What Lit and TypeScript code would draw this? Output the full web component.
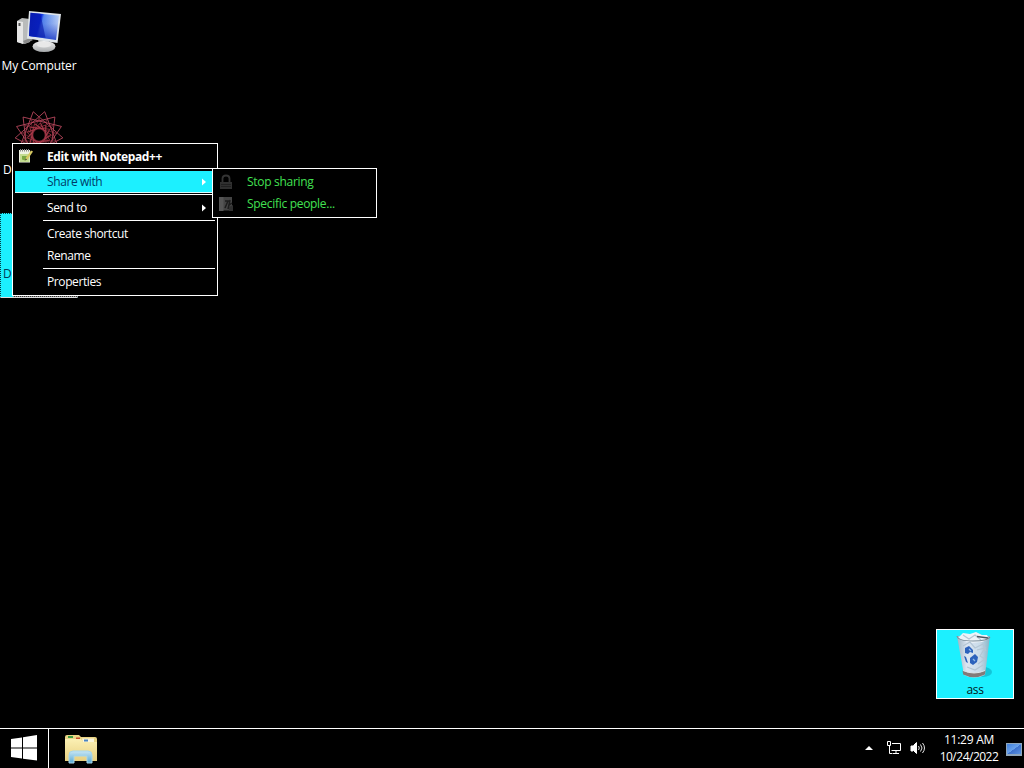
import { LitElement, html, css, svg } from "lit";
import { customElement } from "lit/decorators.js";

const computerIcon = svg`
<svg width="48" height="44" viewBox="0 0 48 44">
  <defs>
    <linearGradient id="scr" x1="0" y1="0" x2="1" y2="0.25"><stop offset="0" stop-color="#0a20b8"/><stop offset=".42" stop-color="#0b2ee0"/><stop offset=".5" stop-color="#5a8cf0"/><stop offset="1" stop-color="#c6dcfa"/></linearGradient>
    <linearGradient id="scr2" x1="0" y1="0" x2="0" y2="1"><stop offset="0" stop-color="#0820b0" stop-opacity="0"/><stop offset=".4" stop-color="#0828c0" stop-opacity=".15"/><stop offset="1" stop-color="#0828c0" stop-opacity=".8"/></linearGradient>
    <linearGradient id="base" x1="0" y1="0" x2="0" y2="1"><stop offset="0" stop-color="#f4f4f4"/><stop offset="1" stop-color="#a5a8aa"/></linearGradient>
  </defs>
  <path d="M2 11 7 8l8 1v23l-6 2-7-2z" fill="#b9bbbb"/><path d="M2 11l6 1v22l-6-2z" fill="#e6e6e6"/>
  <path d="M8 31l7-3 3 2-8 4z" fill="#8a8a8a"/><path d="M3.500 13h2v3h-2z" fill="#555"/>
  <path d="M23 29h10l2 6H24z" fill="#b9bcbd"/>
  <ellipse cx="29" cy="36.500" rx="11.500" ry="5.500" fill="url(#base)"/>
  <ellipse cx="29" cy="35" rx="7" ry="2.500" fill="#e8e8e8"/>
  <path d="M14 1 46 4 42.500 33 12 28.500z" fill="#dfe5ea"/>
  <path d="M15.500 2.800 44 5.500 41 30 14 26z" fill="url(#scr)"/>
  <path d="M15.500 2.800 44 5.500 41 30 14 26z" fill="url(#scr2)"/>
  <path d="M15.500 2.800l10 1 5 24L14 26z" fill="#0718a8" opacity=".6"/>
</svg>`;

const star = (points: number, step: number, radius: number, turn: number) =>
  Array.from({ length: points }, (_, i) => {
    const a = (i * step * 2 * Math.PI) / points + turn;
    return `${(radius * Math.sin(a)).toFixed(2)},${(-radius * Math.cos(a)).toFixed(2)}`;
  }).join(" ");

const spiralIcon = svg`
<svg width="50" height="50" viewBox="-25 -25 50 50" fill="none">
  <polygon points="${star(13, 4, 24, 0.24)}" stroke="#c04a60" stroke-opacity=".85" stroke-width="1"/>
  <polygon points="${star(13, 5, 17, 0)}" stroke="#a33649" stroke-opacity=".6" stroke-width=".9"/>
  <polygon points="${star(13, 4, 12, 0.1)}" stroke="#b53c4e" stroke-opacity=".75" stroke-width="1"/>
</svg>`;

const binIcon = svg`
<svg width="42" height="50" viewBox="0 0 42 50">
  <defs><linearGradient id="can" x1="0" x2="1"><stop offset="0" stop-color="#9fb4c2"/><stop offset=".3" stop-color="#dce6f2"/><stop offset=".7" stop-color="#c8dae8"/><stop offset="1" stop-color="#86b4c6"/></linearGradient></defs>
  <ellipse cx="29" cy="41" rx="9" ry="5" fill="#0a9cb4" opacity=".5"/>
  <path d="M3 5h33l-5 39q-11 5-21 0z" fill="url(#can)"/>
  <path d="M4 7 9 2l7 1 6-2 6 3 5 0 2 4-7 3-12 1z" fill="#edf3f8"/>
  <path d="M9 4l6 4 6-4 6 5M9 15l7-4 5 6 8-4 3 7M23 19l8-2-5 8 5 3-7 5M13 36l8 3 8-5" stroke="#b4c6d4" stroke-width="1.200" fill="none"/>
  <path d="M3 5q1 5 16 5t17-4" stroke="#7b8d99" stroke-width="1.100" fill="none"/><path d="M23 5.500l11 1.500" stroke="#4a5660" stroke-width="1.500"/>
  <path d="M8.500 39.500q11 5 23 0l-.7 4q-11 5.500-21.600 0z" fill="#837b79"/><path d="M9 39.500q11 5 22 0" stroke="#dce4e8" fill="none"/>
  <path d="M11 17l4-2 4 4 0 3-3-1-2 2-3-1zM10 25l2 1 2 6-2-1zM16 27l5-4 3 3-1 5-4 3-3-2z" fill="#2c62bc"/>
  <path d="M15 18l2 2M19 28l2 2" stroke="#8fbbea" stroke-width="1.200"/>
</svg>`;

const notepadIcon = svg`
<svg width="16" height="16" viewBox="0 0 16 16">
  <path d="M1 2h11v12.500H1z" fill="#eef2e2"/><path d="M2 6h9.500v8H2z" fill="#c3dc90"/><path d="M4 8h5l-2 4.500-3-1z" fill="#7aa843"/>
  <path d="M2.500 1v2.500M4.500 1v2.500M6.500 1v2.500M8.500 1v2.500M10.500 1v2.500" stroke="#888"/>
  <path d="M7 12.500 8 9.500 13 2.500l2 1L9.500 11.500z" fill="#d6c862"/><path d="M7 12.500l.7-2 1.300 1z" fill="#333"/>
</svg>`;

const lockIcon = svg`
<svg width="16" height="16" viewBox="0 0 16 16">
  <path d="M4.500 8V4.500q0-3 3.500-3t3.500 3V8" fill="none" stroke="#343434" stroke-width="1.800"/>
  <path d="M2 8h12v7H2z" fill="#303030"/><path d="M3 10.500h10M3 12.500h10" stroke="#202020"/>
</svg>`;

const peopleIcon = svg`
<svg width="16" height="16" viewBox="0 0 16 16">
  <path d="M1 1h13v13.500H1z" fill="#444"/><path d="M1 1h4.500v14H1z" fill="#555"/>
  <path d="M7 5h4M10 5 7 12M12 4l-1 5 3-2M11 9l-1 4" stroke="#1c1c1c" stroke-width="1.500" fill="none"/><path d="M11 11l4-2v6h-4z" fill="#303030"/>
</svg>`;

const windowsIcon = svg`
<svg width="26" height="26" viewBox="0 0 26 26" fill="#fff">
  <path d="M0 4 11 2.500V12.500H0zM12 2.300 26 0V12.500H12zM0 13.500H11V23.500L0 22zM12 13.500H26V25.500L12 23.700z"/>
</svg>`;

const explorerIcon = svg`
<svg width="34" height="30" viewBox="0 0 34 30">
  <defs>
    <linearGradient id="fold" x1="0" y1="0" x2="0" y2="1"><stop offset="0" stop-color="#fbf0b4"/><stop offset="1" stop-color="#e8d080"/></linearGradient>
    <linearGradient id="stand" x1="0" y1="0" x2="0" y2="1"><stop offset="0" stop-color="#c8e6f4"/><stop offset="1" stop-color="#58a9d4"/></linearGradient>
  </defs>
  <path d="M1 3q0-2 2-2h12l2 2h14q2 0 2 2v21H1z" fill="#e9d486"/>
  <path d="M4 2h5v2H4z" fill="#3d9b43"/><path d="M12 3.500h4V6h-4z" fill="#c54a2d"/>
  <path d="M1 5h16l2 3h14v19H1z" fill="url(#fold)"/>
  <path d="M18 4.500h12V8H19z" fill="#fbf6dc"/><path d="M20 5.500h4v2h-4z" fill="#4c86c0"/>
  <path d="M5 29V21q0-4 4-4h15q4 0 4 4v8h-5v-7H10v7z" fill="url(#stand)" stroke="#a8d6ea"/>
</svg>`;

const networkIcon = svg`
<svg width="16" height="14" viewBox="0 0 16 14" fill="none" stroke="#fff">
  <path d="M6 2.500h8.500v7H5.500M10 10v2M7 12.500h6M1.500.5h3v4h-3zM3.500 5v7.500h3" />
</svg>`;

const volumeIcon = svg`
<svg width="16" height="14" viewBox="0 0 16 14" fill="none" stroke="#fff">
  <path d="M1 5h2v5H1zM3.500 4.500l3-3v11l-3-3z" fill="#fff"/>
  <path d="M8.500 5q1.500 2 0 4M10.500 3.500q3 3.500 0 7M12.500 2q4 5 0 10" stroke-width=".9"/>
</svg>`;

const desktopIcon = svg`
<svg width="16" height="13" viewBox="0 0 16 13">
  <defs><linearGradient id="dk" x1="0" y1="0" x2="1" y2="1"><stop offset="0" stop-color="#3f7fdc"/><stop offset=".5" stop-color="#6aa2ea"/><stop offset=".52" stop-color="#3c70cc"/><stop offset="1" stop-color="#5d94e0"/></linearGradient></defs>
  <path d="M0 0h16v13H0z" fill="#8fa6bb"/><path d="M1 1h14v10H1z" fill="url(#dk)"/>
</svg>`;

interface ItemOptions {
  icon?: unknown;
  bold?: boolean;
  hot?: boolean;
  arrow?: boolean;
}

@customElement("app-root")
class AppRoot extends LitElement {
  static styles = css`
    :host { display: flex; flex-direction: column; width: 1024px; height: 768px; overflow: hidden; background: #000; color: #fff; font: 12px/16px "Open Sans", "Noto Sans", sans-serif; letter-spacing: -0.4px; cursor: default; }
    svg { display: block; flex: none; }
    .desktop { position: relative; flex: 1; }
    .shortcut { position: absolute; display: flex; flex-direction: column; align-items: center; white-space: nowrap; box-sizing: border-box; }
    .computer { left: 0; top: 10px; width: 78px; letter-spacing: -0.15px; }
    .computer .name { margin-top: 4px; }
    .spiral { left: 0; top: 110px; width: 78px; height: 70px; }
    .initial { position: absolute; left: 3px; bottom: 2px; }
    .chosen { left: 0; top: 213px; width: 78px; height: 85px; background: #1cf0ff; border: 1px dotted #063a40; border-bottom: 1px solid #dcdcdc; color: #003c58; }
    .chosen .initial { left: 2px; bottom: 15px; }
    .chosen .edge { position: absolute; left: 12px; right: -1px; bottom: 0; height: 1px; background: repeating-linear-gradient(90deg, #999 0 1px, #333 1px 2px); }
    .bin { left: 936px; top: 629px; width: 78px; height: 70px; border: 1px solid #fff; background: #1cf0ff; color: #00161c; padding-top: 1px; letter-spacing: -0.3px; }
    .bin .name { margin-top: 1px; }
    .menu { position: absolute; box-sizing: border-box; background: #000; border: 1px solid #fff; padding: 1px 2px 2px; white-space: nowrap; }
    .main { left: 12px; top: 143px; width: 206px; }
    .sub { left: 212px; top: 168px; width: 165px; padding: 2px; color: #42e052; letter-spacing: -0.3px; }
    .item { display: flex; align-items: center; height: 22px; }
    .slot { width: 32px; display: flex; padding-left: 3px; box-sizing: border-box; }
    .label { flex: 1; }
    .bold { font-weight: 700; padding-top: 2px; letter-spacing: -0.37px; }
    .arrow { margin-right: 9px; }
    .hot { background: #1cf0ff; color: #003c68; box-shadow: inset 0 -1px #d9fdff; }
    .sep { height: 1px; margin: 1px 0 2px 28px; background: #fff; }
    .taskbar { display: flex; box-sizing: border-box; height: 40px; border-top: 1px solid #fff; }
    .start { width: 49px; box-sizing: border-box; border-right: 1px solid #fff; padding: 6px 0 0 11px; }
    .pinned { padding: 5px 0 0 15px; flex: 1; }
    .tray { display: flex; align-items: center; padding-bottom: 1px; }
    .up { margin-right: 13px; }
    .vol { margin-left: 8px; }
    .clock { width: 72px; margin-left: 7px; text-align: center; line-height: 17px; letter-spacing: -0.5px; }
    .time { letter-spacing: -0.25px; }
    .peek { margin: 2px 2px 0 1px; }
  `;

  private menuItem(label: string, opts: ItemOptions = {}) {
    return html`<div class="item ${opts.hot ? "hot" : ""}"><div class="slot">${opts.icon ?? ""}</div><div class="label ${opts.bold ? "bold" : ""}"><span>${label}</span></div>${opts.arrow ? html`<svg class="arrow" width="4" height="8" viewBox="0 0 4 8"><path d="M0 0.500 4 4 0 7.500z" fill="#fff"/></svg>` : ""}</div>`;
  }

  render() {
    const sep = html`<div class="sep"></div>`;
    return html`
      <div class="desktop">
        <div class="shortcut computer">${computerIcon}<span class="name">My Computer</span></div>
        <div class="shortcut spiral">${spiralIcon}<span class="initial">D</span></div>
        <div class="shortcut chosen"><span class="initial">D</span><div class="edge"></div></div>
        <div class="shortcut bin">${binIcon}<span class="name">ass</span></div>
        <div class="menu main">
          ${this.menuItem("Edit with Notepad++", { icon: notepadIcon, bold: true })}${sep}
          ${this.menuItem("Share with", { hot: true, arrow: true })}${sep}
          ${this.menuItem("Send to", { arrow: true })}${sep}
          ${this.menuItem("Create shortcut")}${this.menuItem("Rename")}${sep}
          ${this.menuItem("Properties")}
        </div>
        <div class="menu sub">
          ${this.menuItem("Stop sharing", { icon: lockIcon })}${this.menuItem("Specific people...", { icon: peopleIcon })}
        </div>
      </div>
      <div class="taskbar">
        <div class="start">${windowsIcon}</div>
        <div class="pinned">${explorerIcon}</div>
        <div class="tray">
          <svg class="up" width="8" height="4" viewBox="0 0 8 4"><path d="M0 4 4 0 8 4z" fill="#fff"/></svg>
          ${networkIcon}<div class="vol">${volumeIcon}</div>
          <div class="clock"><div class="time">11:29 AM</div><div>10/24/2022</div></div>
          <div class="peek">${desktopIcon}</div>
        </div>
      </div>`;
  }
}
